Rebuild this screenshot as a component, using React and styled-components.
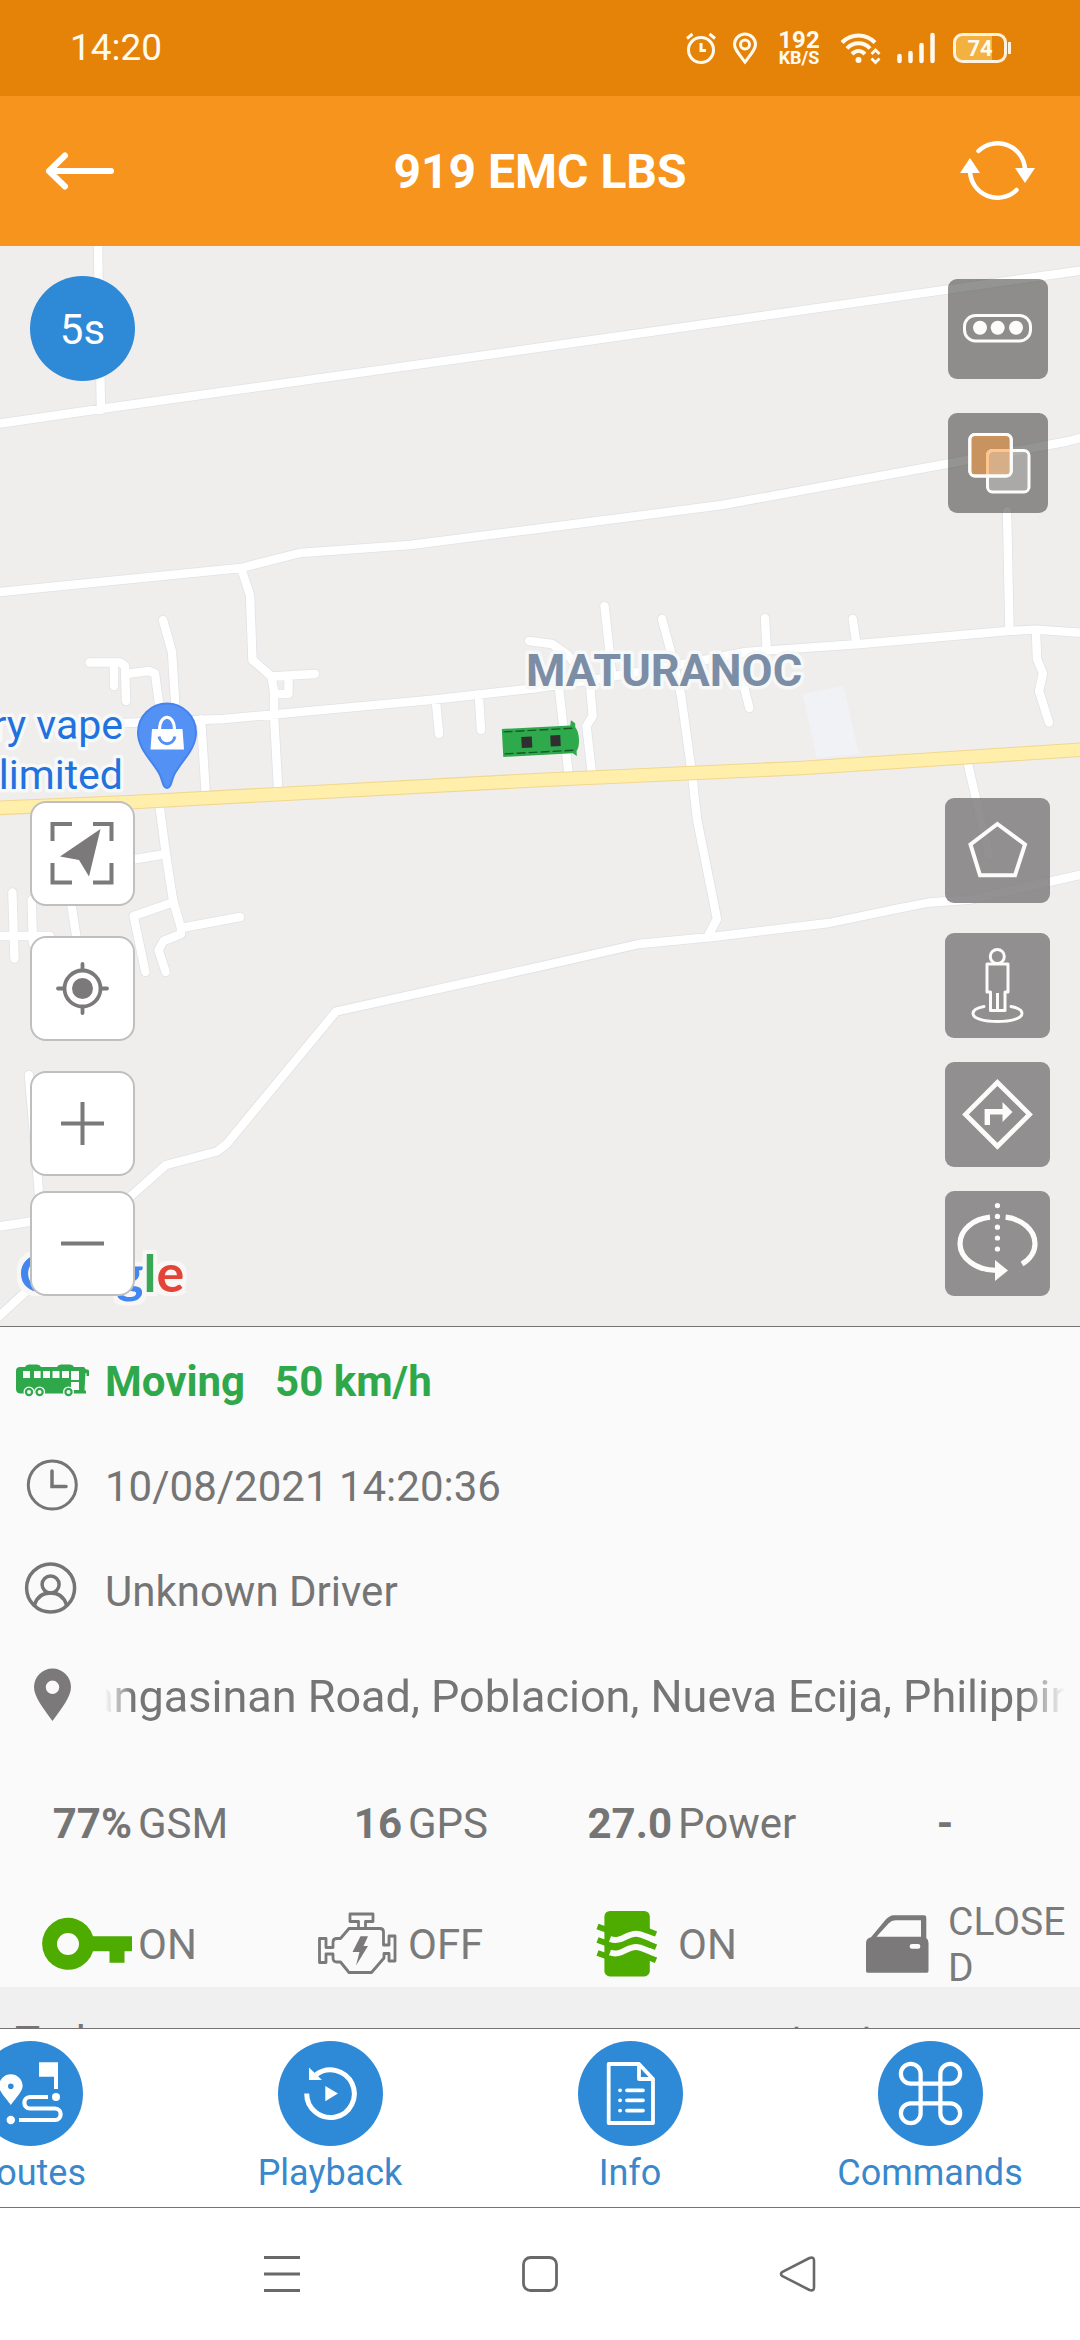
import React from "react";
import styled, { createGlobalStyle } from "styled-components";
import { Command } from "lucide-react";

const GlobalStyle = createGlobalStyle`
  * { box-sizing: border-box; }
  body { margin: 0; background: #fff; }
  body, button { font-family: Roboto, "Liberation Sans", sans-serif; }
  button { border: 0; padding: 0; margin: 0; background: none; cursor: pointer; }
  svg { display: block; flex: none; overflow: visible; }
`;

const Screen = styled.div`
  display: flex;
  flex-direction: column;
  min-height: 100vh;
  overflow: hidden;
`;

/* ---------- status bar ---------- */

const StatusBar = styled.div`
  display: flex;
  align-items: center;
  justify-content: space-between;
  height: 96px;
  padding: 0 69px 0 70px;
  background: #e58208;
  color: #fffaf0;
`;

const Clock = styled.time`
  font-size: 37px;
  line-height: 42px;
`;

const StatusIcons = styled.div`
  display: flex;
  align-items: center;
  gap: 16px;
`;

const NetSpeed = styled.div`
  display: flex;
  flex-direction: column;
  align-items: center;
  width: 48px;
  font-weight: 700;
`;

const SpeedValue = styled.span`
  font-size: 24px;
  line-height: 20px;
`;

const SpeedUnit = styled.span`
  font-size: 18px;
  line-height: 16px;
`;

/* ---------- header ---------- */

const Header = styled.header`
  display: grid;
  grid-template-columns: 160px 1fr 160px;
  align-items: center;
  height: 150px;
  background: #f7941d;
  color: #fff;
`;

const HeaderButton = styled.button`
  display: flex;
  justify-content: ${(p) => (p.$end ? "flex-end" : "flex-start")};
  padding: 0 45px;
  color: inherit;
`;

const Title = styled.h1`
  margin: 0;
  padding-top: 2px;
  text-align: center;
  font-size: 48px;
  line-height: 56px;
  font-weight: 700;
`;

/* ---------- map ---------- */

const MapArea = styled.main`
  position: relative;
  display: flex;
  flex: 1 0 auto;
  justify-content: space-between;
  min-height: 960px;
  padding: 30px;
  background: #efeeec;
  border-bottom: 1px solid #757373;
  overflow: hidden;
`;

const MapDrawing = styled.svg`
  position: absolute;
  inset: 0;
  width: 100%;
  height: 100%;
`;

const MapLogo = styled.div`
  position: absolute;
  left: 19px;
  bottom: 24px;
  font-family: Lato, sans-serif;
  font-size: 52px;
  line-height: 60px;
  font-weight: 700;
  filter: drop-shadow(4px 0 0 #f8f7f6) drop-shadow(-4px 0 0 #f8f7f6) drop-shadow(0 4px 0 #f8f7f6) drop-shadow(0 -4px 0 #f8f7f6);
`;

const LogoLetter = styled.span`
  color: ${(p) => p.$color};
`;

const ControlColumn = styled.div`
  position: relative;
  display: flex;
  flex-direction: column;
  justify-content: space-between;
  align-items: center;
`;

const ControlGroup = styled.div`
  display: flex;
  flex-direction: column;
  gap: ${(p) => p.$gap}px;
  padding-top: ${(p) => p.$top || 0}px;
`;

const RefreshBadge = styled.div`
  display: flex;
  align-items: center;
  justify-content: center;
  width: 105px;
  height: 105px;
  padding-top: 2px;
  border-radius: 50%;
  background: #2e89d6;
  color: #fff;
  font-size: 42px;
  line-height: 50px;
`;

const WhiteButton = styled.button`
  display: flex;
  align-items: center;
  justify-content: center;
  width: 105px;
  height: 105px;
  border: 2px solid #bfbfbf;
  border-radius: 16px;
  background: #fff;
  color: #7b7979;
`;

const GrayButton = styled.button`
  width: ${(p) => p.$size}px;
  height: ${(p) => p.$size}px;
  border-radius: 9px;
  background: ${(p) => (p.$dim ? "rgba(77, 77, 75, 0.6)" : "rgba(128, 126, 127, 0.85)")};
  color: #fcfcfa;
`;

/* ---------- info panel ---------- */

const Panel = styled.section`
  padding-top: 2px;
  background: #fafafa;
  color: #757575;
`;

const InfoRow = styled.div`
  display: flex;
  align-items: center;
  height: 105px;
  padding-right: 15px;
  font-size: 42px;
  line-height: 50px;
  color: ${(p) => (p.$moving ? "#2fa84b" : "#757575")};
  font-weight: ${(p) => (p.$moving ? 700 : 400)};
`;

const Speed = styled.span`
  margin-left: 30px;
`;

const Marquee = styled.div`
  flex: 1;
  min-width: 0;
  overflow: hidden;
  white-space: nowrap;
  font-size: 45px;
  line-height: 54px;
  text-indent: -44px;
  mask-image: linear-gradient(to right, transparent, #000 28px, #000 calc(100% - 40px), transparent);
`;

const Grid = styled.div`
  display: grid;
  grid-template-columns: repeat(4, 1fr);
  align-items: center;
  height: ${(p) => p.$height}px;
  padding-bottom: ${(p) => p.$bottom || 0}px;
  font-size: 42px;
  line-height: 50px;
`;

const Cell = styled.div`
  display: grid;
  grid-template-columns: 1fr 1fr;
  align-items: center;
  column-gap: 6px;
`;

const Value = styled.strong`
  text-align: right;
`;

const Empty = styled.strong`
  text-align: center;
`;

const CellIcon = styled.span`
  display: flex;
  justify-content: flex-end;
  color: ${(p) => (p.$on ? "#4eab00" : "#7b7979")};
`;

const State = styled.span`
  color: #7b7b7b;
  font-size: ${(p) => (p.$small ? 39 : 42)}px;
  line-height: 46px;
  word-break: break-all;
`;

const Summary = styled.div`
  display: grid;
  grid-template-columns: 74% auto;
  align-items: baseline;
  height: 41px;
  padding: 30px 15px 0;
  background: #f0f0f0;
  color: #757575;
  overflow: hidden;
  font-size: 42px;
  line-height: 49px;
`;

const SummaryUnit = styled.span`
  font-size: 39px;
`;

/* ---------- bottom bars ---------- */

const TabBar = styled.nav`
  display: flex;
  justify-content: flex-end;
  padding: 12px 0;
  border: solid #757373;
  border-width: 1px 0;
  background: #fff;
  overflow: hidden;
`;

const Tab = styled.button`
  display: flex;
  flex: 0 0 300px;
  flex-direction: column;
  align-items: center;
  gap: 6px;
  color: #3a88cb;
  font-size: 36px;
  line-height: 43px;
`;

const TabCircle = styled.span`
  display: flex;
  align-items: center;
  justify-content: center;
  width: 105px;
  height: 105px;
  border-radius: 50%;
  background: #2e89d6;
  color: #fff;
`;

const SystemNav = styled.nav`
  display: flex;
  align-items: center;
  justify-content: center;
  gap: 222px;
  height: 132px;
  background: #fff;
  color: #696969;
`;

const NavButton = styled.button`
  color: inherit;
`;

/* ---------- icons ---------- */

const Icon = ({ w, h, width = 4, fill = "none", children, ...rest }) => (
  <svg
    width={w}
    height={h}
    viewBox={`0 0 ${w} ${h}`}
    fill={fill}
    stroke={fill === "none" ? "currentColor" : "none"}
    strokeWidth={width}
    aria-hidden="true"
    {...rest}
  >
    {children}
  </svg>
);

const AlarmIcon = () => (
  <Icon w={32} h={32} width={3}>
    <circle cx="18" cy="18" r="12.5" />
    <path d="M18 11V18.500H23M4 6.500L9.500 2M32 6.500L26.500 2" />
  </Icon>
);

const PlaceIcon = () => (
  <Icon w={28} h={32} width={3}>
    <path d="M14 30C7 21 3.500 17 3.500 12.500a10.500 10.500 0 0 1 21 0C24.500 17 21 21 14 30Z" />
    <circle cx="14" cy="12.500" r="4.500" />
  </Icon>
);

const WifiIcon = () => (
  <Icon w={42} h={30} width={4}>
    <path d="M3 9.500C12 0 27 0 36 9.500M8 15.500C14 8.500 25 8.500 31 15.500M13 21C17 17 22 17 26 21" />
    <circle cx="19.500" cy="27" r="3" fill="currentColor" stroke="none" />
    <path d="M32.500 21L36.500 17L40.500 21M32.500 25.500L36.500 29.500L40.500 25.500" strokeWidth="2.800" />
  </Icon>
);

const SignalIcon = () => (
  <Icon w={40} h={30} width={5}>
    <path d="M2.500 28V23M13.500 28V20M24.500 28V12M35.500 28V2" strokeLinecap="round" strokeWidth="4.500" />
  </Icon>
);

const BatteryIcon = () => (
  <svg width="58" height="30" viewBox="0 0 58 30" role="img" aria-label="Battery 74">
    <path d="M9 2.500H39V27.500H9Q3 27.500 3 21V9Q3 2.500 9 2.500Z" fill="#f3b140" />
    <rect x="1.500" y="1.500" width="51" height="27" rx="8" fill="none" stroke="#fff3df" strokeWidth="3" />
    <path d="M56.500 9V21" stroke="#fff3df" strokeWidth="3" />
    <text x="27" y="23" textAnchor="middle" fontSize="22" fontWeight="700" fill="#fffaf0">74</text>
  </svg>
);

const BackArrow = () => (
  <Icon w={69} h={38} width={6} strokeLinecap="round" strokeLinejoin="round">
    <path d="M66 19H4M20 3.500L4 19L20 34.500" />
  </Icon>
);

const ReloadIcon = () => (
  <Icon w={75} h={62} width={4.500}>
    <path d="M18.500 11A27.500 27.500 0 0 1 65 29M56.500 50A27.500 27.500 0 0 1 10 32" strokeLinecap="round" />
    <path d="M55 28H75L65 43ZM0 33H20L10 18Z" fill="currentColor" stroke="none" />
  </Icon>
);

const BusIcon = () => (
  <Icon w={105} h={60} fill="#2fa84b">
    <path d="M16 19Q16 15 20 15H25Q26 12.500 29 12.500H37Q40 12.500 41 15H57Q58 12.500 61 12.500H70Q73 12.500 74 15H84L86 17.500H87.500Q89 17.500 89 19V24H86.500V21H85.500L84.500 38L86 39V41.500H20Q16 41 16 37Z" />
    <path d="M23 19h7v7h-7zM34 19h6.600v7H34zM43 19h7v7h-7zM52.500 19h7v7h-7zM62 19h7v7h-7zM71 19h8v9h-8zM71 30h8v8h-8z" fill="#fafafa" />
    {[29, 39.6, 68.5].map((x) => (
      <g key={x}>
        <circle cx={x} cy="40" r="5.500" fill="#fafafa" />
        <circle cx={x} cy="40" r="4.200" />
        <circle cx={x} cy="40" r="2" fill="#fafafa" />
      </g>
    ))}
  </Icon>
);

const ClockIcon = () => (
  <Icon w={105} h={60} width={3}>
    <circle cx="52.300" cy="28" r="24" />
    <path d="M52 14V29.500H66" strokeLinecap="round" strokeWidth="3.500" />
  </Icon>
);

const DriverIcon = () => (
  <Icon w={105} h={60} width={3.500}>
    <circle cx="50.600" cy="26" r="24" />
    <circle cx="50.600" cy="22.500" r="8.500" />
    <path d="M34.500 43C37 34.500 43 31 50.600 31S64 34.500 66.500 43" />
  </Icon>
);

const PinIcon = () => (
  <Icon w={105} h={60} fill="#7b7979">
    <path
      fillRule="evenodd"
      d="M52.500 54C43 41 34 29.500 34 20a18.500 18.500 0 0 1 37 0C71 29.500 62 41 52.500 54ZM52.500 13.500a6.700 6.700 0 1 0 0 13.400a6.700 6.700 0 1 0 0-13.400Z"
    />
  </Icon>
);

const KeyIcon = () => (
  <Icon w={90} h={66} fill="currentColor">
    <path
      fillRule="evenodd"
      d="M51 24.300H90V39.300H82.500V50.700H67.500V39.300H51A26 26 0 1 1 51 24.300ZM26 21a11 11 0 1 0 0 22a11 11 0 1 0 0-22Z"
    />
  </Icon>
);

const EngineIcon = () => (
  <Icon w={90} h={66} width={2.800} strokeLinejoin="round">
    <path d="M37 16.500H68q3.500 0 3.500 3.500V33H77V24H83V49H77V41.500H72V46L59.500 60.500H37L28.500 50H25q-4 0-4-4V42H14V50.500H7.500V26.500H14V35.500H21V30q0-3.500 4-3.500H28.500ZM46.500 16V9.500H38V2H61V9.500H53.500V16" />
    <path d="M48.500 24.300H56L51.500 34H56L44 53.500L47.500 40H40.500Z" fill="currentColor" stroke="none" />
  </Icon>
);

const AirIcon = () => (
  <Icon w={90} h={66} width={6}>
    <rect x="22.400" y="-1" width="45.400" height="65.400" rx="5.500" fill="currentColor" stroke="none" />
    <path d="M15.500 14.500L24 17.500M15.500 28L24 31M15.500 41L24 44M66 19L74 22.300M66 32L74 35.300M66 45L74 48.300" />
    <path
      d="M28 27C39 31 44 21.700 54 21.700C60 21.700 66 26 75 28.500M28 40.500C39 44.500 44 35 54 35C60 35 66 39.500 75 42"
      stroke="#fafafa"
    />
  </Icon>
);

const DoorIcon = () => (
  <Icon w={90} h={66} fill="currentColor">
    <path
      fillRule="evenodd"
      d="M14 31Q14 26.500 19 25.300L32.500 9Q37 3.300 42 3.300H72Q74.300 3.300 74.300 5.500V26Q76.500 27.500 76.500 31V59Q76.500 60.700 75 60.700H15.500Q14 60.700 14 59ZM24.500 24.800H69V8.300H43.500Q39.500 8.300 36.500 11.500ZM60 32a2.400 2.400 0 0 0 0 4.800h6a2.400 2.400 0 0 0 0-4.800Z"
    />
  </Icon>
);

const RoutesIcon = () => (
  <Icon w={105} h={105} width={4.200}>
    <path d="M70 56H52c-7.500 0-7.500 11.500 0 11.500H77c7.500 0 7.500 11.500 0 11.500H41" />
    <g fill="currentColor" stroke="none">
      <path d="M61 21.300H80V48H76V35.700H61Z" />
      <circle cx="78" cy="56" r="4" />
      <circle cx="32.800" cy="79" r="4.200" />
      <path fillRule="evenodd" d="M32.800 64C26 55 21 50 21 45a11.800 11.800 0 0 1 23.600 0C44.600 50 39.500 55 32.800 64ZM32.800 42.500a2.800 2.800 0 1 0 0 5.600a2.800 2.800 0 1 0 0-5.600Z" />
    </g>
  </Icon>
);

const PlaybackIcon = () => (
  <Icon w={105} h={105} width={5}>
    <path d="M28.700 52.500A23.800 23.800 0 1 0 38 33.800" />
    <path d="M31 26.500L44 39H31ZM47.300 45V60.300L60 52.500Z" fill="currentColor" stroke="none" />
  </Icon>
);

const InfoIcon = () => (
  <Icon w={105} h={105} width={3.800} strokeLinejoin="round">
    <path d="M30.700 23H61L75 38V82H30.700ZM61 23V38H75" />
    <path d="M42 49.300h.1M42 59.300h.1M42 69.600h.1M49 49.300H65M49 59.300H65M49 69.600H65" strokeLinecap="round" />
  </Icon>
);

const FollowIcon = () => (
  <Icon w={105} h={105}>
    <path d="M42 23H22.500V40M63 23H81.500V40M22.500 62V81.500H42M63 81.500H81.500V62" />
    <path d="M70.500 28L30 55.500L49 59L59 75.500Z" fill="currentColor" stroke="none" />
  </Icon>
);

const LocateIcon = () => (
  <Icon w={105} h={105} width={3.800} strokeLinecap="round">
    <circle cx="52.500" cy="52.500" r="18" />
    <circle cx="52.500" cy="52.500" r="10.500" fill="currentColor" stroke="none" />
    <path d="M28 52.500H34M71 52.500H77M52.500 28V34M52.500 71V77" />
  </Icon>
);

const PlusIcon = () => (
  <Icon w={105} h={105}>
    <path d="M31 52.500H74M52.500 31V74" />
  </Icon>
);

const MinusIcon = () => (
  <Icon w={105} h={105}>
    <path d="M31 52.500H74" />
  </Icon>
);

const TrafficIcon = () => (
  <Icon w={100} h={100} width={3}>
    <rect x="16.500" y="36.500" width="66" height="25.500" rx="11" />
    <g fill="currentColor" stroke="none">
      <circle cx="32" cy="48.800" r="7" />
      <circle cx="49.700" cy="48.800" r="7" />
      <circle cx="68" cy="48.800" r="7" />
    </g>
  </Icon>
);

const LayersIcon = () => (
  <Icon w={100} h={100} width={3}>
    <rect x="21.800" y="21.500" width="41.500" height="41.500" rx="5" fill="#c9935f" />
    <rect x="39.500" y="37.500" width="41.500" height="41.500" rx="5" fill="rgba(255,255,255,0.250)" />
    <path d="M39.500 61.500V42.500Q39.500 37.500 44.500 37.500H62" stroke="#ffc58f" />
    <rect x="21.800" y="21.500" width="41.500" height="41.500" rx="5" />
  </Icon>
);

const FenceIcon = () => (
  <Icon w={105} h={105}>
    <path d="M52.400 26L80 46.400L70 77.300H35L25.500 46.400Z" />
  </Icon>
);

const StreetViewIcon = () => (
  <Icon w={105} h={105} width={3}>
    <circle cx="52.300" cy="23.500" r="7" />
    <path d="M42 31H63V59H60V77.500H45.500V59H42ZM52.500 60V77.500" strokeLinejoin="round" />
    <path d="M39 73.500C31 75 28 78 28 80.500c0 5 11 8 24.500 8s24.500-3 24.500-8c0-2.500-3-5.500-11-7" strokeLinecap="round" />
  </Icon>
);

const DirectionsIcon = () => (
  <Icon w={105} h={105} width={4.800}>
    <path d="M52.400 20.500L84.500 52.400L52.400 84.300L20.500 52.400Z" />
    <path d="M39.600 63V47H57.500V40L67.500 50L57.500 60V52.500H45V63Z" fill="currentColor" stroke="none" />
  </Icon>
);

const RotateIcon = () => (
  <Icon w={105} h={105} width={5.200}>
    <path d="M45 26.200C28 28 15 39 15 52.700C15 67 31 79.300 51 79.300M60.600 26.200C77 28 90 39 90 52.700C90 61 85 68 77 73" />
    <path d="M50 69V90L63 79.500Z" fill="currentColor" stroke="none" />
    <path d="M52.400 14.600h.1M52.400 25.400h.1M52.400 36.200h.1M52.400 47h.1M52.400 58h.1" strokeLinecap="round" />
  </Icon>
);

const RecentsIcon = () => (
  <Icon w={36} h={36} width={3}>
    <path d="M0 1.500H36M0 18H36M0 34.500H36" />
  </Icon>
);

const HomeIcon = () => (
  <Icon w={36} h={36} width={2.800}>
    <rect x="1.500" y="1.500" width="33" height="33" rx="7" />
  </Icon>
);

const NavBackIcon = () => (
  <Icon w={36} h={36} width={2.600} strokeLinejoin="round">
    <path d="M2 16.200Q0 18 2 19.800L29.500 34Q34 35.500 34 31.500V4.500Q34 .5 29.500 2Z" />
  </Icon>
);

/* ---------- map drawing ---------- */

const ROADS = [
  "M0 177.500L100 163L540 101.500L1080 24.700",
  "M98 -4L98.500 35L101 164",
  "M0 346L241 322L300 307L410 299L540 282.500L722 259L946 218L1067 195.500L1084 191",
  "M241 322L250 349L252.500 414L271.500 430.500L315 428M271.500 430.500L274 445V469L278 541",
  "M288.500 431V448H274",
  "M124 477L224 473L430 454L537 442L598 433L678 419L746 406L860 398L1008 385L1036 383.600L1084 387",
  "M436 456L439 488M479 452L481 484",
  "M163 374L172 406L176 470M89.500 416.500H120L125 420L126 455M114 418V440M126 428L149 425L155 427.500L160 465",
  "M201 473L205.600 545",
  "M529 395L552 398L568 409L590 438L592.700 470L586.500 480L592 528M559 442L568.600 528",
  "M604.500 360L612 428M662 373L672 410L681 449L692 528",
  "M765 372L766.600 402M736 410L749.400 462M852.700 373L856 395",
  "M1007 265L1009.400 381M1036 386L1037 413L1043 427.500L1039 445L1049 476.500",
  "M692 528L697 573L717 673L708 690M967 514L989 609",
  "M-4 1073L31 1041L131 950L166 919L217 905.500L227 897.600L336 765.500L540 720.500L639 698L712 691L829 677L898 662.600L929 656.500L970 653.700L1084 628",
  "M-4 981L60 971M29 829L40 960",
  "M159 556L166 609L173 654L181 682L240 671M130 614L166 608M171 657L133.600 670L145.400 726M181 682V688L163.600 695L158.500 704L165.700 726",
  "M12.400 646.500L14.500 712.600M31.700 654L33 698M-4 690H50M70 650L77 695",
];

const MapCanvas = () => (
  <MapDrawing viewBox="0 0 1080 1080" preserveAspectRatio="xMidYMid slice" role="img" aria-label="Map">
    <path d="M802.400 448L843.400 440L859 508L817 512Z" fill="#f0f2f5" />
    <g fill="none" strokeLinecap="round" strokeLinejoin="round">
      <path d={ROADS.join("")} stroke="#e0e2e5" strokeWidth="10" />
      <path d={ROADS.join("")} stroke="#fff" strokeWidth="8.400" />
      <path d="M-4 562L134 556L282 548L540 534L802 522L1084 503.500" stroke="#f1d78f" strokeWidth="14.600" />
      <path d="M-4 562L134 556L282 548L540 534L802 522L1084 503.500" stroke="#ffefab" strokeWidth="12.400" />
    </g>
    <g fontFamily="Roboto, sans-serif" strokeLinejoin="round" style={{ paintOrder: "stroke" }} stroke="#f7f8f8" strokeWidth="7">
      <g fontSize="41" fill="#2172de" textAnchor="end">
        <text x="123" y="493">ry vape</text>
        <text x="123" y="543">limited</text>
      </g>
      <text x="664" y="440" fontSize="45" fontWeight="700" fill="#7c8da6" textAnchor="middle">MATURANOC</text>
    </g>
    <path
      d="M167 542C163 542 163 536 160 529C153 515 138 504 138 486.500a29 29 0 0 1 58 0C196 504 181 515 174 529C171 536 171 542 167 542Z"
      fill="#5491f5"
      stroke="#4583ee"
      strokeWidth="2"
    />
    <path d="M152 483H182.500L184 503.500H150.500Z" fill="#fff" />
    <path d="M159.500 484C159.500 467 174.500 467 174.500 484" fill="none" stroke="#fff" strokeWidth="3" />
    <path d="M159 490.500C161 500 173 500 175 490.500" fill="none" stroke="#5491f5" strokeWidth="3" />
    <g transform="translate(540 495) rotate(-3)">
      <path d="M-37.500 -14H31L32 -19L36 -16V-12Q39 -8 39 0T36 12V17L32 14H-37.500Z" fill="#2ea94c" />
      <path d="M-36 -11H33M-36 11H33" stroke="#145c26" strokeWidth="1.400" strokeDasharray="9 3" />
      <path d="M-18.500 -5h10.500v11h-10.500zM10.500 -5h10v11h-10z" fill="#2f2f2f" />
    </g>
  </MapDrawing>
);

const LOGO = [
  ["G", "#4486f0"],
  ["o", "#e34437"],
  ["o", "#f7ba15"],
  ["g", "#4486f0"],
  ["l", "#3aa757"],
  ["e", "#e34437"],
];

const TABS = [
  ["Routes", <RoutesIcon />],
  ["Playback", <PlaybackIcon />],
  ["Info", <InfoIcon />],
  ["Commands", <Command size={79} strokeWidth={1.3} />],
];

export default function App() {
  return (
    <Screen>
      <GlobalStyle />
      <StatusBar>
        <Clock>14:20</Clock>
        <StatusIcons>
          <AlarmIcon />
          <PlaceIcon />
          <NetSpeed>
            <SpeedValue>192</SpeedValue>
            <SpeedUnit>KB/S</SpeedUnit>
          </NetSpeed>
          <WifiIcon />
          <SignalIcon />
          <BatteryIcon />
        </StatusIcons>
      </StatusBar>

      <Header>
        <HeaderButton aria-label="Back"><BackArrow /></HeaderButton>
        <Title>919 EMC LBS</Title>
        <HeaderButton $end aria-label="Refresh"><ReloadIcon /></HeaderButton>
      </Header>

      <MapArea>
        <MapCanvas />
        <MapLogo>
          {LOGO.map(([letter, color], i) => (
            <LogoLetter key={i} $color={color}>{letter}</LogoLetter>
          ))}
        </MapLogo>
        <ControlColumn>
          <RefreshBadge>5s</RefreshBadge>
          <ControlGroup $gap={30}>
            <WhiteButton aria-label="Follow vehicle"><FollowIcon /></WhiteButton>
            <WhiteButton aria-label="My location"><LocateIcon /></WhiteButton>
            <ControlGroup $gap={15}>
              <WhiteButton aria-label="Zoom in"><PlusIcon /></WhiteButton>
              <WhiteButton aria-label="Zoom out"><MinusIcon /></WhiteButton>
            </ControlGroup>
          </ControlGroup>
        </ControlColumn>
        <ControlColumn>
          <ControlGroup $gap={34} $top={3}>
            <GrayButton $size={100} $dim aria-label="Traffic"><TrafficIcon /></GrayButton>
            <GrayButton $size={100} $dim aria-label="Layers"><LayersIcon /></GrayButton>
          </ControlGroup>
          <ControlGroup $gap={30}>
            <GrayButton $size={105} aria-label="Geofence"><FenceIcon /></GrayButton>
            <ControlGroup $gap={24}>
              <GrayButton $size={105} aria-label="Street view"><StreetViewIcon /></GrayButton>
              <GrayButton $size={105} aria-label="Directions"><DirectionsIcon /></GrayButton>
              <GrayButton $size={105} aria-label="Rotate"><RotateIcon /></GrayButton>
            </ControlGroup>
          </ControlGroup>
        </ControlColumn>
      </MapArea>

      <Panel>
        <InfoRow $moving>
          <BusIcon />
          <span>Moving</span>
          <Speed>50 km/h</Speed>
        </InfoRow>
        <InfoRow>
          <ClockIcon />
          <span>10/08/2021 14:20:36</span>
        </InfoRow>
        <InfoRow>
          <DriverIcon />
          <span>Unknown Driver</span>
        </InfoRow>
        <InfoRow>
          <PinIcon />
          <Marquee>Pangasinan Road, Poblacion, Nueva Ecija, Philippines</Marquee>
        </InfoRow>
        <Grid $height={150}>
          <Cell><Value>77%</Value><span>GSM</span></Cell>
          <Cell><Value>16</Value><span>GPS</span></Cell>
          <Cell><Value>27.0</Value><span>Power</span></Cell>
          <Empty>-</Empty>
        </Grid>
        <Grid $height={88} $bottom={2}>
          <Cell><CellIcon $on><KeyIcon /></CellIcon><State>ON</State></Cell>
          <Cell><CellIcon><EngineIcon /></CellIcon><State>OFF</State></Cell>
          <Cell><CellIcon $on><AirIcon /></CellIcon><State>ON</State></Cell>
          <Cell><CellIcon><DoorIcon /></CellIcon><State $small>CLOSED</State></Cell>
        </Grid>
        <Summary>
          <span>Today</span>
          <SummaryUnit>km/h</SummaryUnit>
        </Summary>
      </Panel>

      <TabBar>
        {TABS.map(([label, icon]) => (
          <Tab key={label}>
            <TabCircle>{icon}</TabCircle>
            {label}
          </Tab>
        ))}
      </TabBar>

      <SystemNav>
        <NavButton aria-label="Recent apps"><RecentsIcon /></NavButton>
        <NavButton aria-label="Home"><HomeIcon /></NavButton>
        <NavButton aria-label="Back"><NavBackIcon /></NavButton>
      </SystemNav>
    </Screen>
  );
}
